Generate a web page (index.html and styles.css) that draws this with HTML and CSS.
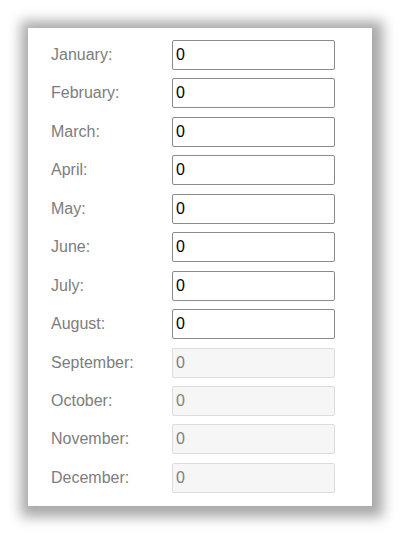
FILE: index.html
```html
<!DOCTYPE html>
<html>
<head>
<meta charset="utf-8">
<link rel="stylesheet" href="styles.css">
</head>
<body>
<div class="card">
  <form class="months">
    <label class="lbl">January:</label><input class="fld" type="text" value="0">
    <label class="lbl">February:</label><input class="fld" type="text" value="0">
    <label class="lbl">March:</label><input class="fld" type="text" value="0">
    <label class="lbl">April:</label><input class="fld" type="text" value="0">
    <label class="lbl">May:</label><input class="fld" type="text" value="0">
    <label class="lbl">June:</label><input class="fld" type="text" value="0">
    <label class="lbl">July:</label><input class="fld" type="text" value="0">
    <label class="lbl">August:</label><input class="fld" type="text" value="0">
    <label class="lbl">September:</label><input class="fld" type="text" value="0" disabled>
    <label class="lbl">October:</label><input class="fld" type="text" value="0" disabled>
    <label class="lbl">November:</label><input class="fld" type="text" value="0" disabled>
    <label class="lbl">December:</label><input class="fld" type="text" value="0" disabled>
  </form>
</div>
</body>
</html>
```
FILE: styles.css
```css
html, body {
  margin: 0;
  padding: 0;
  background: #ffffff;
}
body {
  padding: 28px 0 29px 28px;
  font-family: "Liberation Sans", Arial, sans-serif;
}
.card {
  width: 321px;
  padding: 12px 0 13px 23px;
  background: #ffffff;
  box-shadow: 2px 2px 12px 9px rgba(0, 0, 0, 0.34);
}
.months {
  display: grid;
  grid-template-columns: 121px 163px;
  row-gap: 8.45px;
  align-items: center;
  margin: 0;
}
.lbl {
  font-size: 16px;
  color: #7d7d7d;
}
.fld {
  box-sizing: border-box;
  height: 30px;
  width: 163px;
  margin: 0;
  padding: 0 3px;
  border: 1px solid #8a8a8a;
  border-radius: 2px;
  font-family: "Liberation Sans", Arial, sans-serif;
  font-size: 16px;
  color: #000000;
  background: #ffffff;
  outline: none;
}
.fld:disabled {
  background: #f6f6f6;
  border-color: #dddddd;
  color: #808080;
}
```
